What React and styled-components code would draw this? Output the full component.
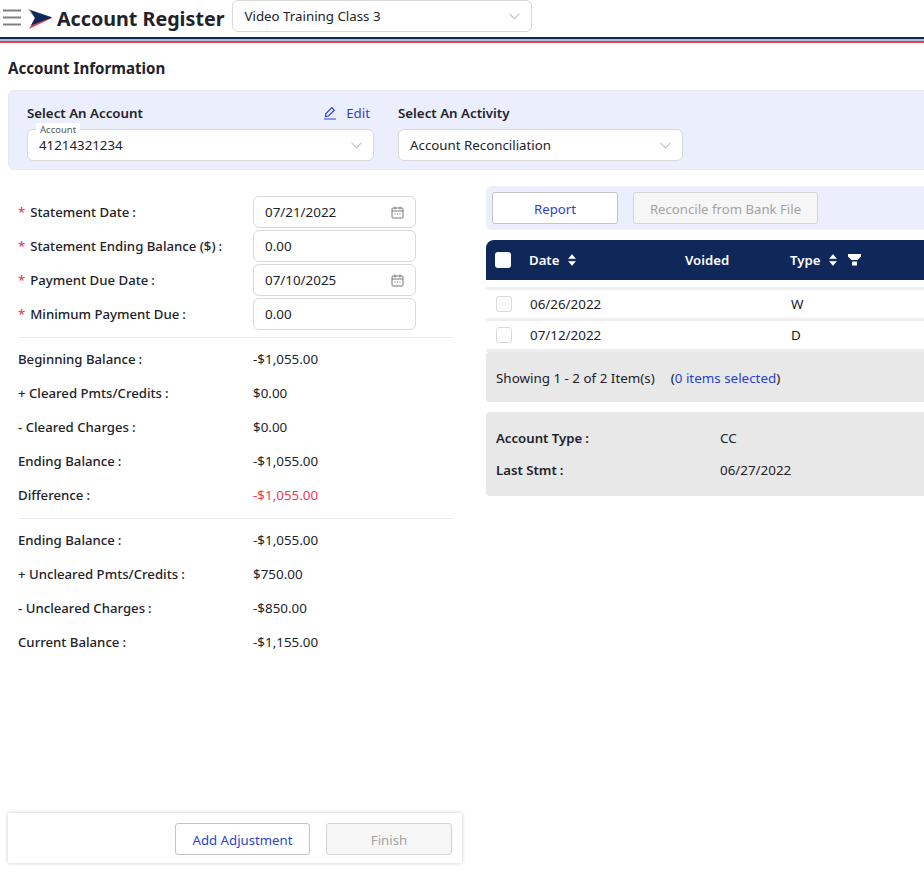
import styled, { createGlobalStyle } from 'styled-components';

const GlobalStyle = createGlobalStyle`
  html, body {
    margin: 0;
    padding: 0;
    background: #fff;
    overflow: hidden;
  }
  body {
    font-family: "Noto Sans", "Open Sans", "Liberation Sans", sans-serif;
    font-size: 13.2px;
    color: #22222a;
  }
`;

const Page = styled.div`
  width: 924px;
  height: 873px;
  overflow: hidden;
`;

const Header = styled.header`
  height: 37px;
  display: flex;
  align-items: flex-start;
  padding-left: 3px;
  box-sizing: border-box;
`;

const Title = styled.h1`
  margin: 5px 8px 0 4px;
  font-size: 19.7px;
  line-height: 28px;
  font-weight: 700;
  color: #22222a;
  white-space: nowrap;
`;

const BurgerIcon = styled.svg`
  margin-top: 9px;
  flex-shrink: 0;
`;

const LogoIcon = styled.svg`
  margin: 9px 0 0 6px;
  flex-shrink: 0;
`;

const Rule = styled.div`
  height: 6px;
  border-top: 2px solid #10275a;
  border-bottom: 2px solid #e8434f;
  background: #a9c0d4;
  box-sizing: border-box;
`;

const Select = styled.div`
  position: relative;
  width: ${p => p.$width}px;
  height: 32px;
  background: #fff;
  border: 1px solid #d9d9d9;
  border-radius: 6px;
  box-sizing: border-box;
  display: flex;
  align-items: center;
  justify-content: space-between;
  padding: 0 11px;
  font-size: 13.3px;
  flex-shrink: 0;
`;

const FloatLabel = styled.span`
  position: absolute;
  left: 8px;
  top: -7px;
  padding: 0 4px;
  background: #fff;
  font-size: 9.5px;
  line-height: 13px;
  color: #555;
`;

const Content = styled.div`
  padding: 0 0 0 8px;
`;

const SectionTitle = styled.h2`
  margin: 15px 0 12px;
  font-size: 15.1px;
  line-height: 20px;
  font-weight: 700;
`;

const ActivityBand = styled.section`
  width: 930px;
  height: 80px;
  box-sizing: border-box;
  background: #ebeefc;
  border: 1px solid #e6e9f6;
  border-radius: 6px;
  padding: 12px 18px 0;
  display: flex;
  gap: 24px;
`;

const Field = styled.div`
  display: flex;
  flex-direction: column;
  gap: 6px;
`;

const FieldHead = styled.div`
  display: flex;
  justify-content: space-between;
  align-items: center;
  height: 20px;
  padding-right: 4px;
  font-size: 13.3px;
  font-weight: 600;
`;

const EditLink = styled.span`
  display: flex;
  align-items: center;
  gap: 9px;
  font-weight: 400;
  color: #2b3fd6;
`;

const Columns = styled.div`
  display: flex;
  gap: 24px;
  margin-top: 16px;
`;

const Left = styled.div`
  width: 454px;
  height: 687px;
  display: flex;
  flex-direction: column;
  flex-shrink: 0;
`;

const Form = styled.div`
  padding: 9px 10px 0;
  flex: 1;
`;

const InputRow = styled.div`
  display: flex;
  align-items: center;
  height: 34px;
  font-weight: 500;
`;

const LabelCol = styled.div`
  width: 235px;
  flex-shrink: 0;
  white-space: nowrap;
`;

const Colon = styled.span`
  margin-left: 3px;
`;

const Req = styled.span`
  color: #f0384f;
  margin-right: 5px;
`;

const Input = styled.div`
  width: 163px;
  height: 32px;
  border: 1px solid #d9d9d9;
  border-radius: 6px;
  box-sizing: border-box;
  padding: 0 11px;
  display: flex;
  align-items: center;
  justify-content: space-between;
  font-size: 13.4px;
  font-weight: 400;
`;

const Divider = styled.hr`
  margin: 6px 0 4px;
  border: none;
  border-top: 1px solid #e9e9e9;
`;

const ValueRow = styled.div`
  display: flex;
  align-items: center;
  height: 34px;
  font-weight: 500;
`;

const Value = styled.div`
  font-size: 13.4px;
  font-weight: 400;
  color: ${p => (p.$alert ? '#ee3a55' : '#22222a')};
`;

const Footer = styled.div`
  height: 50px;
  box-sizing: border-box;
  margin-bottom: 10px;
  box-shadow: 0 0 4px rgba(0, 0, 0, 0.22);
  display: flex;
  justify-content: flex-end;
  align-items: center;
  gap: 16px;
  padding: 2px 10px 0;
`;

const Button = styled.div`
  width: ${p => p.$width}px;
  height: 32px;
  box-sizing: border-box;
  border: 1px solid ${p => (p.$disabled ? '#d4d4d4' : '#c4c4c4')};
  border-radius: 3px;
  background: ${p => (p.$disabled ? '#f6f6f6' : '#fff')};
  color: ${p => (p.$disabled ? '#a3a3a3' : '#2b3fd6')};
  display: flex;
  align-items: center;
  justify-content: center;
  padding-top: 1px;
`;

const Right = styled.div`
  width: 600px;
  flex-shrink: 0;
`;

const Toolbar = styled.div`
  height: 44px;
  background: #ebeefc;
  border-radius: 6px;
  display: flex;
  align-items: center;
  gap: 15px;
  padding: 0 6px;
`;

const TableHead = styled.div`
  margin-top: 10px;
  height: 40px;
  background: #10275a;
  border-radius: 8px 8px 0 0;
  display: flex;
  align-items: center;
  color: #fff;
  font-weight: 600;
`;

const HeadCheck = styled.span`
  width: 16px;
  height: 16px;
  margin: 0 18px 0 9px;
  background: #fff;
  border-radius: 3px;
  flex-shrink: 0;
`;

const HeadCell = styled.div`
  width: ${p => p.$width}px;
  display: flex;
  align-items: center;
  gap: 9px;
  flex-shrink: 0;
`;

const FunnelIcon = styled.svg`
  margin-left: 2px;
`;

const Rows = styled.div`
  margin-top: 7px;
  border-top: 3px solid #efefef;
`;

const Row = styled.div`
  height: 28px;
  display: flex;
  align-items: center;
  font-size: 13.4px;
  border-bottom: 3px solid #efefef;
`;

const RowCheck = styled.span`
  width: 16px;
  height: 16px;
  margin: 0 18px 0 10px;
  border: 1px solid #d9d9d9;
  border-radius: 3px;
  box-sizing: border-box;
  flex-shrink: 0;
`;

const Cell = styled.div`
  width: ${p => p.$width}px;
  flex-shrink: 0;
`;

const Pager = styled.div`
  height: 50px;
  box-sizing: border-box;
  background: #e8e8e8;
  border-radius: 4px;
  display: flex;
  align-items: center;
  padding: 1px 0 0 10px;
  font-size: 13.4px;
  gap: 16px;
`;

const Blue = styled.span`
  color: #2b3fd6;
`;

const InfoCard = styled.div`
  margin-top: 10px;
  height: 84px;
  background: #e8e8e8;
  border-radius: 4px;
  padding: 10px;
  box-sizing: border-box;
`;

const InfoRow = styled.div`
  display: flex;
  align-items: center;
  height: 32px;
  font-weight: 600;
`;

const InfoLabel = styled.div`
  width: 224px;
`;

const InfoValue = styled.div`
  font-size: 13.4px;
  font-weight: 400;
`;

const Burger = () => (
  <BurgerIcon width="18" height="17" viewBox="0 0 18 17" fill="none" stroke="#808080" strokeWidth="2">
    <path d="M0 1.500h18M0 8.500h18M0 15.500h18" />
  </BurgerIcon>
);

const Logo = () => (
  <LogoIcon width="26" height="21" viewBox="0 0 26 21">
    <path d="M1 0 L8 9 L2 20 L25 9 Z" fill="#e8434f" />
    <path d="M1 0 L25 8 L8 9 Z" fill="#8fc6d6" />
    <path d="M3 1 L25 8.500 L4 16.500 L8 9 Z" fill="#10275a" />
  </LogoIcon>
);

const Chevron = () => (
  <svg width="11" height="7" viewBox="0 0 11 7" fill="none" stroke="#c4c4c4" strokeWidth="1.100">
    <path d="M.5.700l5 5.300 5-5.300" />
  </svg>
);

const Pencil = () => (
  <svg width="14" height="14" viewBox="0 0 14 14" fill="none" stroke="#2b3fd6" strokeWidth="1.200">
    <path d="M1 13h12M2.500 10.500l.5-3L8.800 1.700l2.500 2.500L5.500 10z" />
  </svg>
);

const Calendar = () => (
  <svg width="13" height="13" viewBox="0 0 13 13" fill="none" stroke="#777" strokeWidth="1">
    <rect x="1" y="2" width="11" height="10" rx="1" />
    <path d="M1 5h11M4 .5v3M9 .5v3M3.500 8h1M6 8h1M8.500 8h1" />
  </svg>
);

const Sort = () => (
  <svg width="8" height="12" viewBox="0 0 8 12" fill="#fff" stroke="#fff" strokeWidth=".6" strokeLinejoin="round">
    <path d="M4 .6l3.400 4H.6zM4 11.400l3.400-4H.6z" />
  </svg>
);

const Funnel = () => (
  <FunnelIcon width="13" height="12" viewBox="0 0 13 12" fill="#fff">
    <path d="M0 0h13v2.500l-3.500 3.500H3.500L0 2.500zM4 7.500h5V11.500H4z" />
  </FunnelIcon>
);

const requiredFields = [
  { label: 'Statement Date', value: '07/21/2022', date: true },
  { label: 'Statement Ending Balance ($)', value: '0.00' },
  { label: 'Payment Due Date', value: '07/10/2025', date: true },
  { label: 'Minimum Payment Due', value: '0.00' },
];

const cleared = [
  { label: 'Beginning Balance', value: '-$1,055.00' },
  { label: '+ Cleared Pmts/Credits', value: '$0.00' },
  { label: '- Cleared Charges', value: '$0.00' },
  { label: 'Ending Balance', value: '-$1,055.00' },
  { label: 'Difference', value: '-$1,055.00', alert: true },
];

const uncleared = [
  { label: 'Ending Balance', value: '-$1,055.00' },
  { label: '+ Uncleared Pmts/Credits', value: '$750.00' },
  { label: '- Uncleared Charges', value: '-$850.00' },
  { label: 'Current Balance', value: '-$1,155.00' },
];

const ValueRows = ({ rows }) =>
  rows.map(r => (
    <ValueRow key={r.label}>
      <LabelCol>{r.label}<Colon>:</Colon></LabelCol>
      <Value $alert={r.alert}>{r.value}</Value>
    </ValueRow>
  ));

export default function App() {
  return (
    <Page>
      <GlobalStyle />
      <Header>
        <Burger />
        <Logo />
        <Title>Account Register</Title>
        <Select $width={300}>
          Video Training Class 3
          <Chevron />
        </Select>
      </Header>
      <Rule />
      <Content>
        <SectionTitle>Account Information</SectionTitle>
        <ActivityBand>
          <Field>
            <FieldHead>
              Select An Account
              <EditLink><Pencil />Edit</EditLink>
            </FieldHead>
            <Select $width={347}>
              <FloatLabel>Account</FloatLabel>
              41214321234
              <Chevron />
            </Select>
          </Field>
          <Field>
            <FieldHead>Select An Activity</FieldHead>
            <Select $width={285}>
              Account Reconciliation
              <Chevron />
            </Select>
          </Field>
        </ActivityBand>
        <Columns>
          <Left>
            <Form>
              {requiredFields.map(f => (
                <InputRow key={f.label}>
                  <LabelCol><Req>*</Req>{f.label}<Colon>:</Colon></LabelCol>
                  <Input>{f.value}{f.date && <Calendar />}</Input>
                </InputRow>
              ))}
              <Divider />
              <ValueRows rows={cleared} />
              <Divider />
              <ValueRows rows={uncleared} />
            </Form>
            <Footer>
              <Button $width={135}>Add Adjustment</Button>
              <Button $width={126} $disabled>Finish</Button>
            </Footer>
          </Left>
          <Right>
            <Toolbar>
              <Button $width={126}>Report</Button>
              <Button $width={185} $disabled>Reconcile from Bank File</Button>
            </Toolbar>
            <TableHead>
              <HeadCheck />
              <HeadCell $width={156}>Date <Sort /></HeadCell>
              <HeadCell $width={105}>Voided</HeadCell>
              <HeadCell $width={120}>Type <Sort /><Funnel /></HeadCell>
            </TableHead>
            <Rows>
              <Row><RowCheck /><Cell $width={261}>06/26/2022</Cell><Cell $width={100}>W</Cell></Row>
              <Row><RowCheck /><Cell $width={261}>07/12/2022</Cell><Cell $width={100}>D</Cell></Row>
            </Rows>
            <Pager>
              Showing 1 - 2 of 2 Item(s)
              <span>(<Blue>0 items selected</Blue>)</span>
            </Pager>
            <InfoCard>
              <InfoRow><InfoLabel>Account Type<Colon>:</Colon></InfoLabel><InfoValue>CC</InfoValue></InfoRow>
              <InfoRow><InfoLabel>Last Stmt<Colon>:</Colon></InfoLabel><InfoValue>06/27/2022</InfoValue></InfoRow>
            </InfoCard>
          </Right>
        </Columns>
      </Content>
    </Page>
  );
}
